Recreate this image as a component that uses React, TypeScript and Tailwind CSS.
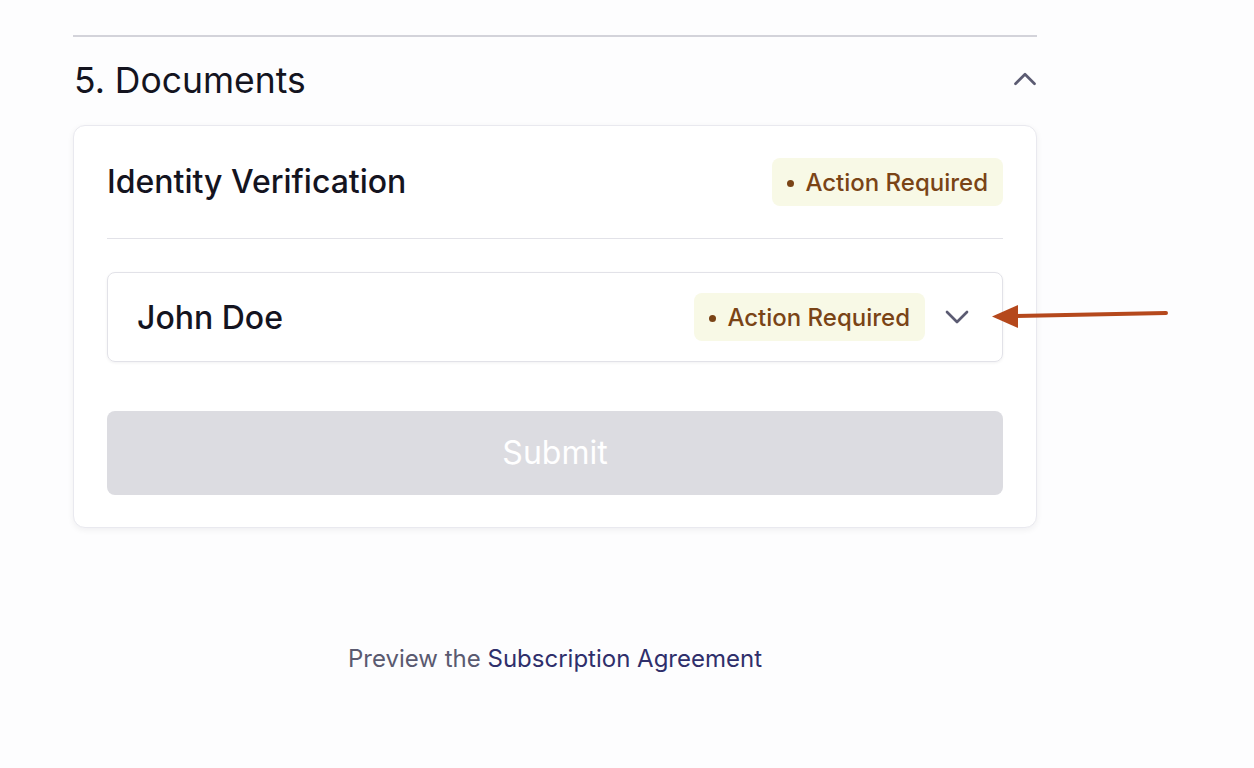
import { ChevronDown, ChevronUp } from 'lucide-react';

function Badge() {
  return (
    <span className="inline-flex items-center gap-[11px] h-12 px-[15px] pt-[2px] rounded-lg bg-[#f8f9e6] text-[#7a4416] text-[24px] font-medium leading-none">
      <span className="w-[7px] h-[7px] rounded-full bg-[#7a4416]" />
      Action Required
    </span>
  );
}

export default function App() {
  return (
    <div className="relative min-h-[768px] bg-[#fdfdfe] font-['Inter',sans-serif] text-[#14141f]">
      <div className="pl-[73px] pt-[35px] w-[1037px]">
        <div className="border-t-2 border-[#d3d3da]" />

        <div className="flex items-center justify-between h-[88px] pl-px">
          <h2 className="text-[35.5px] leading-none">5. Documents</h2>
          <ChevronUp size={38} strokeWidth={1.7} className="text-[#5b5b72] -mr-[7px] -mt-1" />
        </div>

        <div className="rounded-xl border border-[#e9e9ef] bg-white shadow-[0_2px_6px_rgba(20,20,40,0.06)] px-[33px] pt-[32px] pb-[32px]">
          <div className="flex items-center justify-between pb-[32px] border-b border-[#e2e2e8]">
            <h3 className="text-[32px] font-medium leading-none">Identity Verification</h3>
            <Badge />
          </div>

          <div className="mt-[33px] flex items-center justify-between h-[90px] rounded-lg border border-[#e2e2e8] shadow-[0_1px_3px_rgba(20,20,40,0.06)] pl-[29px] pr-[25px]">
            <span className="text-[32px] font-medium leading-none pt-[2px]">John Doe</span>
            <div className="flex items-center gap-[12px]">
              <Badge />
              <ChevronDown size={40} strokeWidth={1.6} className="text-[#5b5b72]" />
            </div>
          </div>

          <button className="mt-[49px] w-full h-[84px] rounded-lg bg-[#dcdce1] text-white text-[32px]">
            Submit
          </button>
        </div>

        <p className="mt-[113px] text-center text-[24px] text-[#5a5a70]">
          Preview the <span className="text-[#2f2f6b]">Subscription Agreement</span>
        </p>
      </div>

      <svg className="absolute left-[988px] top-[300px]" width="182" height="32" viewBox="0 0 182 32">
        <line x1="28" y1="16" x2="178" y2="13" stroke="#b5481c" strokeWidth="4" strokeLinecap="round" />
        <polygon points="4,16.5 30,5 30,28" fill="#b5481c" />
      </svg>
    </div>
  );
}
